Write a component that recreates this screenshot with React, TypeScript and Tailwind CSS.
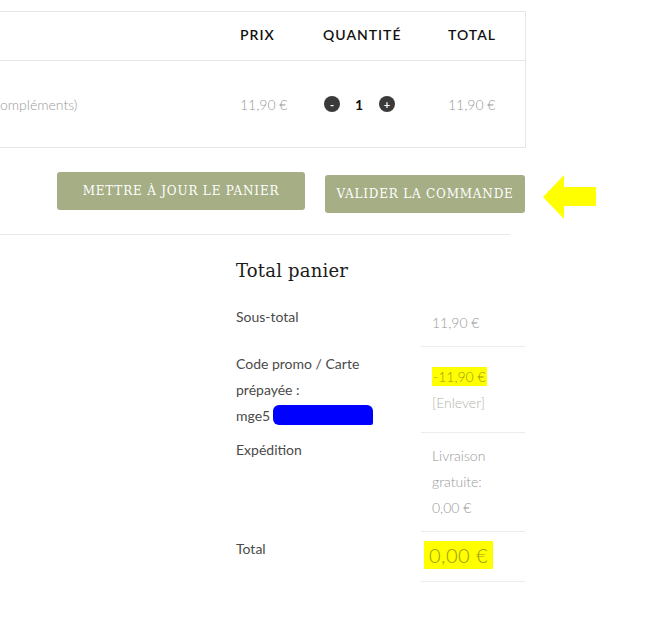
import React from 'react';

const sans = "font-['Lato','Open_Sans',sans-serif]";
const slab = "font-['DejaVu_Serif','Liberation_Serif',serif]";

const MinusPlus: React.FC<{ sign: string }> = ({ sign }) => (
  <span className="flex h-[16px] w-[16px] items-center justify-center rounded-full bg-[#3a3a3a] text-[11px] font-bold leading-none text-white">
    {sign}
  </span>
);

const TotalsRow: React.FC<{ label: React.ReactNode; children: React.ReactNode }> = ({ label, children }) => (
  <div className="flex">
    <div className="w-[185px] py-[4px] text-[14px] leading-[26px] text-[#4a4a4a]">{label}</div>
    <div className="flex w-[104px] flex-col justify-center border-b border-[#ececec] py-[10px] pl-[11px] text-[14px] font-light leading-[26px] text-[#999]">
      {children}
    </div>
  </div>
);

export default function App() {
  return (
    <div className={`relative h-[622px] w-[652px] overflow-hidden bg-white ${sans}`}>
      {/* cart table */}
      <div className="mt-[11px] w-[526px] border-y border-r border-[#e6e6e6]">
        <div className="grid h-[49px] grid-cols-[240px_83px_125px_78px] items-center border-b border-[#e6e6e6] pb-[3px] text-[14px] font-semibold tracking-[1px] text-[#111]">
          <div />
          <div>PRIX</div>
          <div>QUANTITÉ</div>
          <div>TOTAL</div>
        </div>
        <div className="grid h-[86px] grid-cols-[240px_83px_125px_78px] items-center text-[14px] font-light text-[#9a9a9a]">
          <div>ompléments)</div>
          <div>11,90 €</div>
          <div className="flex items-center pl-[1px]">
            <MinusPlus sign="-" />
            <span className="ml-[15px] w-[10px] text-[14px] font-bold text-[#111]">1</span>
            <span className="ml-[14px]">
              <MinusPlus sign="+" />
            </span>
          </div>
          <div>11,90 €</div>
        </div>
      </div>

      {/* actions */}
      <div className="flex h-[87px] w-[510px] items-start border-b border-[#e8e8e8] pl-[57px] pt-[24px]">
        <button className={`h-[38px] w-[248px] shrink-0 whitespace-nowrap rounded-[3px] bg-[#a5ae84] text-[12px] tracking-[0.8px] text-white ${slab}`}>
          METTRE À JOUR LE PANIER
        </button>
        <button className={`ml-[20px] mt-[3px] h-[38px] w-[200px] shrink-0 whitespace-nowrap rounded-[3px] bg-[#a5ae84] text-[12px] tracking-[0.8px] text-white ${slab}`}>
          VALIDER LA COMMANDE
        </button>
        <svg className="ml-[18px] mt-[3px] shrink-0" width="54" height="44" viewBox="0 0 54 44">
          <polygon points="0,22 21,0 21,12 53,12 53,31 21,31 21,44" fill="#ffff00" />
        </svg>
      </div>

      {/* totals */}
      <div className="ml-[236px] w-[289px] pt-[23px]">
        <h2 className={`mb-[16px] text-[18px] leading-[26px] tracking-[0.2px] text-[#1a1a1a] ${slab}`}>Total panier</h2>
        <TotalsRow label="Sous-total">
          <span>11,90 €</span>
        </TotalsRow>
        <TotalsRow
          label={
            <>
              Code promo / Carte
              <br />
              prépayée :
              <br />
              <span className="relative">
                mge5
                <span className="absolute left-[37px] top-[-2px] h-[20px] w-[100px] rounded-[6px] rounded-br-[2px] bg-[#0000ff]" />
              </span>
            </>
          }
        >
          <span>
            <span className="bg-[#ffff00] px-[1px] py-[1px] text-[#9b9a16]">-11,90 €</span>
          </span>
          <span className="text-[#b4b4a8]">[Enlever]</span>
        </TotalsRow>
        <TotalsRow label="Expédition">
          <span>Livraison</span>
          <span>gratuite:</span>
          <span>0,00 €</span>
        </TotalsRow>
        <TotalsRow label="Total">
          <span className="-ml-[8px] leading-[27px]">
            <span className="bg-[#ffff00] px-[5px] py-[2px] text-[20px] tracking-[0.5px] text-[#9b9a16]">0,00 €</span>
          </span>
        </TotalsRow>
      </div>
    </div>
  );
}
